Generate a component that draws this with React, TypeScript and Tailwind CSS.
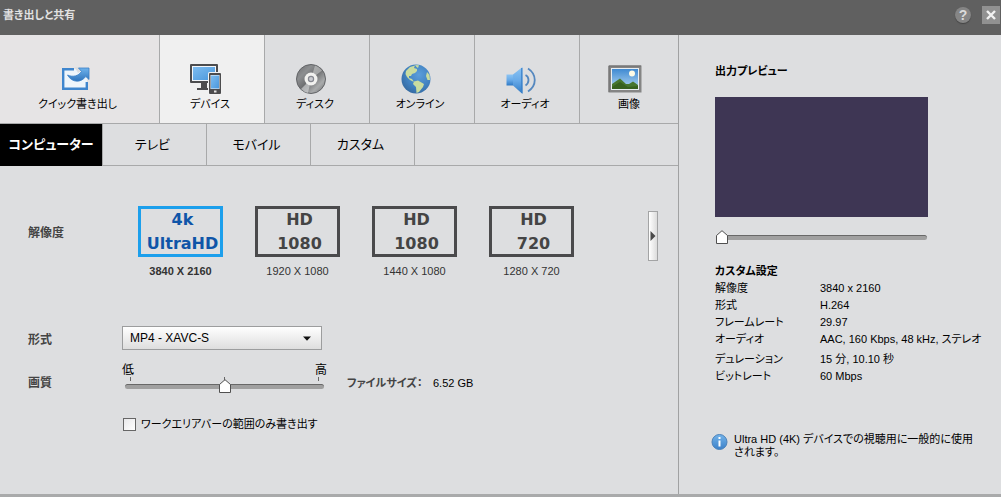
import { useState } from 'react';
import type { ReactNode } from 'react';
import clsx from 'clsx';

const ExportIcon = () => (
  <svg width="32" height="32" viewBox="0 0 32 32">
    <defs>
      <linearGradient id="export-arrow" x1="0" y1="0" x2="0" y2="1">
        <stop offset="0" stopColor="#6fb3ec" />
        <stop offset="1" stopColor="#2f74bd" />
      </linearGradient>
    </defs>
    <rect x="5" y="6" width="24" height="21" fill="#eef5fb" />
    <path
      d="M16 6.200H5.200V25.800H28.800V19"
      fill="none"
      stroke="#3f86ce"
      strokeWidth="2.400"
    />
    <path d="M16.500 4H21L24 7.500L20 10Z" fill="#dddee0" />
    <path
      d="M20.500 5H31V16.500L27.800 13.500C23 20 14 20 9.500 12C15 14.500 20.500 13 23.500 8.500Z"
      fill="url(#export-arrow)"
      stroke="#3a7fc6"
      strokeWidth="0.800"
    />
  </svg>
);

const DeviceIcon = () => (
  <svg width="34" height="32" viewBox="0 0 34 32">
    <defs>
      <linearGradient id="device-screen" x1="0" y1="0" x2="1" y2="1">
        <stop offset="0" stopColor="#7dbcf0" />
        <stop offset="1" stopColor="#4a97dc" />
      </linearGradient>
    </defs>
    <rect x="1" y="1" width="28" height="19" rx="1" fill="#4c4c4e" />
    <rect x="3" y="3" width="24" height="15" fill="#f2f6fa" />
    <rect x="4" y="4" width="22" height="13" fill="url(#device-screen)" />
    <path d="M12 20h6v5h3v2H8v-2h4z" fill="#4c4c4e" />
    <rect x="19" y="9" width="14" height="23" rx="1.500" fill="#f2f2f2" />
    <rect x="20" y="10" width="12" height="21" rx="1" fill="#4c4c4e" />
    <rect x="21.500" y="12" width="9" height="14" fill="#f2f6fa" />
    <rect x="22" y="12.500" width="8" height="13" fill="url(#device-screen)" />
    <rect x="25" y="27.500" width="2.500" height="2" fill="#e4e4e4" />
  </svg>
);

const DiscIcon = () => (
  <svg width="32" height="32" viewBox="0 0 32 32">
    <defs>
      <linearGradient id="disc-body" x1="0" y1="0" x2="1" y2="1">
        <stop offset="0" stopColor="#6a6b6d" />
        <stop offset="0.280" stopColor="#8d8f91" />
        <stop offset="0.500" stopColor="#6c6d6f" />
        <stop offset="0.750" stopColor="#a9abac" />
        <stop offset="1" stopColor="#626365" />
      </linearGradient>
    </defs>
    <circle cx="16" cy="16" r="14.500" fill="url(#disc-body)" stroke="#626467" />
    <path d="M16 16L20 2.500A14 14 0 0 1 27 7.500Z" fill="#c9cbcc" opacity="0.600" />
    <path d="M16 16L6 26A14 14 0 0 0 13 30Z" fill="#d9dbdc" opacity="0.600" />
    <circle cx="16" cy="16" r="6.500" fill="#f1f1ef" />
    <circle cx="16" cy="16" r="2.600" fill="#c9cbd0" stroke="#85878f" strokeWidth="1.200" />
  </svg>
);

const GlobeIcon = () => (
  <svg width="32" height="32" viewBox="0 0 32 32">
    <defs>
      <radialGradient id="globe-sea" cx="0.600" cy="0.350" r="0.700">
        <stop offset="0" stopColor="#5b9edb" />
        <stop offset="0.650" stopColor="#3f7fbe" />
        <stop offset="1" stopColor="#35699f" />
      </radialGradient>
    </defs>
    <circle cx="16" cy="16" r="14.500" fill="url(#globe-sea)" />
    <g fill="#c9dca0">
      <path d="M6 8L10 4L15 2.500L14 5L17 6L17 8L15 10L12 11L11 13L9 13L9 15L12 16L14 19L10 17L7 14L5.500 11Z" />
      <path d="M15 2L19 2.200L18 5L16.500 4Z" />
      <path d="M14 18.500L18 17.500L24 21L23 24L19 29L16.500 30L16 24L13 21Z" />
      <path d="M27 9L29.500 12L30 17L27.500 17L26 13Z" />
    </g>
  </svg>
);

const SpeakerIcon = () => (
  <svg width="32" height="32" viewBox="0 0 32 32">
    <defs>
      <linearGradient id="speaker-cone" x1="0" y1="0" x2="0" y2="1">
        <stop offset="0" stopColor="#8cc4f3" />
        <stop offset="0.500" stopColor="#68aae8" />
        <stop offset="1" stopColor="#2f79c4" />
      </linearGradient>
    </defs>
    <path d="M1.500 11.500H8V22.500H1.500Z" fill="url(#speaker-cone)" />
    <path d="M8 11.500L17.500 4V31L8 22.500Z" fill="url(#speaker-cone)" />
    <path d="M16.800 5V30" stroke="#3a80c9" strokeWidth="1.200" />
    <path
      d="M20.500 12C24.500 14 24.500 20 20.500 22.500M23 5.500C32 11.500 32 22.500 23 28.500"
      fill="none"
      stroke="#5588bf"
      strokeWidth="1.800"
    />
  </svg>
);

const PictureIcon = () => (
  <svg width="34" height="32" viewBox="0 0 34 32">
    <defs>
      <linearGradient id="picture-sky" x1="0" y1="0" x2="0" y2="1">
        <stop offset="0" stopColor="#3f8ad2" />
        <stop offset="1" stopColor="#b5d8f2" />
      </linearGradient>
    </defs>
    <rect x="0.500" y="2.500" width="33" height="27" fill="#858585" />
    <path d="M1 29V3H33" fill="none" stroke="#6e6e6e" />
    <rect x="3" y="5" width="28" height="22" fill="#e9eef2" />
    <rect x="4" y="6" width="26" height="20" fill="url(#picture-sky)" />
    <circle cx="24" cy="10.500" r="3" fill="#fdfbe6" />
    <path d="M4 21L12 15.500L18 21L21 21L25 18.500L30 22V26H4Z" fill="#47762f" />
    <path d="M4 24L12 19L20 24L30 23V26H4Z" fill="#37611f" />
  </svg>
);

const TABS: { label: string; icon: ReactNode; style: string }[] = [
  { label: 'クイック書き出し', icon: <ExportIcon />, style: 'w-40 border-r pr-1 bg-[#e6e4e5]' },
  { label: 'デバイス', icon: <DeviceIcon />, style: 'w-[105px] border-r pr-1 bg-[#f0f0f0]' },
  { label: 'ディスク', icon: <DiscIcon />, style: 'w-[105px] border-r pr-1' },
  { label: 'オンライン', icon: <GlobeIcon />, style: 'w-[105px] border-r pr-1' },
  { label: 'オーディオ', icon: <SpeakerIcon />, style: 'w-[105px] border-r pr-1' },
  { label: '画像', icon: <PictureIcon />, style: 'flex-1' },
];

const SUB_TABS = ['コンピューター', 'テレビ', 'モバイル', 'カスタム'];

const RESOLUTIONS = [
  { top: '4k', bottom: 'UltraHD', size: '3840 X 2160' },
  { top: 'HD', bottom: '1080', size: '1920 X 1080' },
  { top: 'HD', bottom: '1080', size: '1440 X 1080' },
  { top: 'HD', bottom: '720', size: '1280 X 720' },
];

const SETTINGS = [
  [
    ['解像度', '3840 x 2160'],
    ['形式', 'H.264'],
    ['フレームレート', '29.97'],
    ['オーディオ', 'AAC, 160 Kbps, 48 kHz, ステレオ'],
  ],
  [
    ['デュレーション', '15 分, 10.10 秒'],
    ['ビットレート', '60 Mbps'],
  ],
];

const Slider = ({ label, initial }: { label: string; initial: number }) => {
  const [value, setValue] = useState(initial);
  return (
    <div className="relative flex h-3.5 items-center">
      <div className="h-[5px] w-full rounded-full border-t border-[#686868] bg-[#a0a0a0]" />
      <svg
        className="absolute top-0"
        style={{ left: `calc((100% - 12px) * ${value / 100})` }}
        width="12"
        height="14"
        viewBox="0 0 12 14"
      >
        <path d="M6 0.700L11.500 5.500V13.500H0.500V5.500Z" fill="#fff" stroke="#505050" />
      </svg>
      <input
        type="range"
        aria-label={label}
        value={value}
        onChange={(e) => setValue(Number(e.target.value))}
        className="absolute inset-0 w-full opacity-0"
      />
    </div>
  );
};

const Header = () => (
  <header className="flex h-[35px] items-start justify-between bg-[#606060] pl-[3px]">
    <h1 className="pt-1.5 text-[11px] leading-[18px] font-bold text-[#e2e2e2]">
      書き出しと共有
    </h1>
    <div className="flex items-center gap-[11px] pt-1.5 pr-px">
      <button
        aria-label="ヘルプ"
        className="size-4 rounded-full bg-[#858585] text-sm leading-4 font-bold text-[#dadada] shadow-[0_1px_1px_#444]"
      >
        ?
      </button>
      <button
        aria-label="閉じる"
        className="flex size-[18px] items-center justify-center bg-[#919191]"
      >
        <svg width="10" height="10" viewBox="0 0 10 10">
          <path d="M1 1L9 9M9 1L1 9" stroke="#f2f2f2" strokeWidth="2.400" />
        </svg>
      </button>
    </div>
  </header>
);

const Tabs = () => {
  const [active, setActive] = useState('コンピューター');
  return (
    <>
      <nav className="flex h-[89px] border-b border-[#a8a9aa] text-[11px]">
        {TABS.map((tab) => (
          <button
            key={tab.label}
            className={clsx('flex flex-col items-center border-[#a8a9aa] pt-7', tab.style)}
          >
            <span className="pr-2">{tab.icon}</span>
            <span className="leading-[18px]">{tab.label}</span>
          </button>
        ))}
      </nav>
      <nav className="flex h-[42px] border-b border-[#a8a9aa] text-[13px]">
        {SUB_TABS.map((label) => (
          <button
            key={label}
            onClick={() => setActive(label)}
            className={clsx(
              'border-r border-[#a8a9aa]',
              label === active ? '-mb-px w-[103px] bg-black font-bold text-white' : 'w-26 pr-1',
            )}
          >
            {label}
          </button>
        ))}
      </nav>
    </>
  );
};

const ResolutionRow = () => {
  const [selected, setSelected] = useState(0);
  return (
    <div className="flex items-start">
      <h2 className="w-[110px] leading-[54px] font-bold text-[#444]">解像度</h2>
      <div className="flex gap-8">
        {RESOLUTIONS.map((item, index) => (
          <button
            key={item.size}
            onClick={() => setSelected(index)}
            className="flex flex-col items-center"
          >
            <span
              className={clsx(
                'flex h-[51px] w-[85px] flex-col items-center justify-center border-3 pl-1 font-["DejaVu_Sans"] text-base leading-6 font-bold',
                index === selected
                  ? 'border-[#1c9fec] text-[#0f55a8]'
                  : 'border-[#4a4a4c] text-[#444]',
              )}
            >
              <span>{item.top}</span>
              <span>{item.bottom}</span>
            </span>
            <span
              className={clsx(
                'mt-1 text-[11px] leading-5 text-[#333]',
                index === selected && 'font-bold',
              )}
            >
              {item.size}
            </span>
          </button>
        ))}
      </div>
      <button
        aria-label="次へ"
        className="mt-[5px] mr-5 ml-auto flex h-[50px] w-2.5 items-center justify-center border border-[#a3a4a5] bg-linear-to-r from-white to-[#dcdcdc]"
      >
        <svg width="6" height="10" viewBox="0 0 6 10" className="shrink-0">
          <path d="M0.500 0L5.500 5L0.500 10Z" fill="#4a4a4a" />
        </svg>
      </button>
    </div>
  );
};

const ExportForm = () => (
  <div className="pt-10 pl-7">
    <ResolutionRow />
    <div className="mt-[45px] flex items-end">
      <label htmlFor="format" className="w-[94px] leading-5 font-bold text-[#444]">
        形式
      </label>
      <div className="relative">
        <select
          id="format"
          className="h-6 w-[200px] appearance-none border border-[#9c9d9e] bg-linear-to-b from-white to-[#dedede] pr-6 pl-[7px]"
        >
          <option>MP4 - XAVC-S</option>
        </select>
        <svg
          className="pointer-events-none absolute top-2.5 right-[11px]"
          width="8"
          height="5"
          viewBox="0 0 8 5"
        >
          <path d="M0 0.500H8L4 4.800Z" fill="#111" />
        </svg>
      </div>
    </div>
    <div className="mt-[13px] flex items-end">
      <h2 className="w-[94px] leading-5 font-bold text-[#444]">画質</h2>
      <div className="w-[205px]">
        <div className="flex justify-between leading-[14px]">
          <span>低</span>
          <span>高</span>
        </div>
        <div className="flex justify-between px-2">
          <i className="h-1 w-px bg-[#666]" />
          <i className="h-1 w-px bg-[#666]" />
          <i className="h-1 w-px bg-[#666]" />
        </div>
        <div className="-mt-0.5 px-[3px]">
          <Slider label="画質" initial={50} />
        </div>
      </div>
      <span className="ml-5 w-[86px] text-[11px] leading-5 font-bold text-[#444]">
        ファイルサイズ：
      </span>
      <span className="text-[11px] leading-5">6.52 GB</span>
    </div>
    <label className="mt-[22px] ml-[95px] flex items-center gap-[5px] text-[11px] leading-[18px]">
      <input
        type="checkbox"
        className="size-[13px] appearance-none border border-[#666] bg-linear-to-br from-[#e8e8ea] to-white checked:bg-[#3f86ce]"
      />
      ワークエリアバーの範囲のみ書き出す
    </label>
  </div>
);

const Preview = () => (
  <aside className="w-[322px] shrink-0 pt-[26px] pl-9 text-[11px]">
    <h2 className="leading-5 font-bold">出力プレビュー</h2>
    <div className="mt-4 h-[120px] w-[213px] bg-[#3e3654]" />
    <div className="mt-[13px] w-[213px] px-px">
      <Slider label="プレビュー位置" initial={0} />
    </div>
    <h2 className="mt-[19px] leading-[17px] font-bold">カスタム設定</h2>
    <div className="flex flex-col gap-[3px] leading-[17px]">
      {SETTINGS.map((group) => (
        <dl key={group[0][0]} className="grid grid-cols-[105px_1fr]">
          {group.map(([name, value]) => (
            <div key={name} className="contents">
              <dt>{name}</dt>
              <dd className="whitespace-nowrap">{value}</dd>
            </div>
          ))}
        </dl>
      ))}
    </div>
    <div className="mt-12 -ml-1 flex gap-1.5 pr-6">
      <svg width="17" height="18" viewBox="0 0 17 18" className="shrink-0">
        <defs>
          <linearGradient id="info-fill" x1="0" y1="0" x2="0" y2="1">
            <stop offset="0" stopColor="#74b4ea" />
            <stop offset="1" stopColor="#3b80c8" />
          </linearGradient>
        </defs>
        <circle cx="8.500" cy="9" r="7.500" fill="url(#info-fill)" stroke="#4b82ba" />
        <path d="M8.500 4V6M8.500 7.500V13.500" stroke="#fff" strokeWidth="2" />
      </svg>
      <p className="leading-[13px]">
        Ultra HD (4K) デバイスでの視聴用に一般的に使用されます。
      </p>
    </div>
  </aside>
);

export default function App() {
  return (
    <div className="flex min-h-screen flex-col border-b-3 border-[#a9aaab] bg-[#dddee0] font-['Liberation_Sans','Noto_Sans_CJK_JP',sans-serif] text-xs text-black [font-feature-settings:'palt']">
      <Header />
      <div className="flex flex-1">
        <main className="min-w-0 flex-1 border-r border-[#a0a1a2]">
          <Tabs />
          <ExportForm />
        </main>
        <Preview />
      </div>
    </div>
  );
}
